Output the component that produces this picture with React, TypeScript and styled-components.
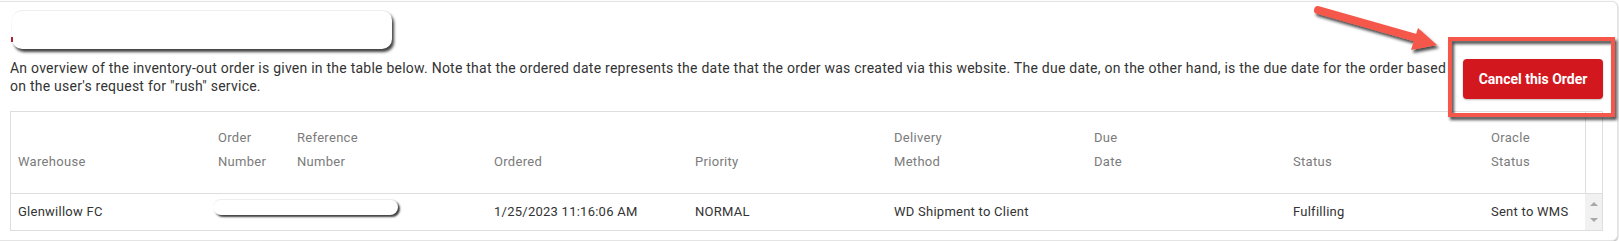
import React from 'react';
import styled, { createGlobalStyle } from 'styled-components';

const GlobalStyle = createGlobalStyle`
  html, body { margin: 0; padding: 0; background: #fff; }
  body { font-family: Roboto, "Noto Sans", "Liberation Sans", Arial, sans-serif; color: #333; }
  * { box-sizing: border-box; }
`;

const Page = styled.div`
  position: relative;
  width: 1619px;
  height: 241px;
  overflow: hidden;
`;

const Card = styled.section`
  width: 1619px;
  height: 240px;
  margin: 1px 0 0 -1px;
  border: 1px solid #e4e4e4;
  border-radius: 0 6px 6px 0;
  box-shadow: 0 1px 2px rgba(0, 0, 0, 0.35);
  padding: 8px 14px 0 10px;
  background: #fff;
`;

const Top = styled.div`
  display: flex;
  align-items: flex-start;
  justify-content: space-between;
`;

const Intro = styled.div`
  width: 1445px;
`;

const TitleRedaction = styled.div`
  position: relative;
  width: 380px;
  height: 39px;
  margin: 0 0 10px 2px;
  border-radius: 10px;
  background: #fff;
  border-top: 1px solid #eee;
  box-shadow: 2px 3px 3px rgba(0, 0, 0, 0.75);
  &::before {
    content: '';
    position: absolute;
    left: -1px;
    top: 26px;
    width: 2px;
    height: 5px;
    background: #b0202a;
  }
`;

const Paragraph = styled.p`
  margin: 0;
  font-size: 14px;
  letter-spacing: 0.24px;
  line-height: 18px;
  color: #333;
`;

const CancelButton = styled.button`
  margin-top: 49px;
  width: 140px;
  height: 40px;
  border: none;
  border-radius: 4px;
  background: #d3171f;
  color: #fff;
  font-family: Roboto, "Noto Sans", Arial, sans-serif;
  font-weight: 700;
  font-size: 14px;
  box-shadow: 0 1px 2px rgba(0, 0, 0, 0.25);
  cursor: pointer;
`;

const Table = styled.table`
  margin-top: 12px;
  width: 1593px;
  table-layout: fixed;
  border-collapse: separate;
  border-spacing: 0;
  border: 1px solid #dedede;
`;

const Col = styled.col<{ $w: number }>`
  width: ${(p) => p.$w}px;
`;

const Th = styled.th<{ $gutter?: boolean }>`
  padding: 14px 7px 19px;
  text-align: left;
  vertical-align: bottom;
  font-weight: 400;
  font-size: 13px;
  letter-spacing: 0.3px;
  line-height: 24px;
  color: #7b7b7b;
  border-bottom: 1px solid #dedede;
  ${(p) => (p.$gutter ? 'border-left: 1px solid #dedede; padding: 0;' : '')}
`;

const Td = styled.td`
  position: relative;
  padding: 9px 7px;
  font-size: 13px;
  letter-spacing: 0.25px;
  line-height: 18px;
  color: #333;
  white-space: nowrap;
`;

const Gutter = styled.td`
  background: #f1f1f1;
  padding: 0;
  vertical-align: top;
`;

const GutterArrows = styled.div`
  display: flex;
  flex-direction: column;
  align-items: center;
  gap: 12px;
  padding-top: 8px;
`;

const Triangle = styled.span<{ $down?: boolean }>`
  width: 0;
  height: 0;
  border-left: 4px solid transparent;
  border-right: 4px solid transparent;
  ${(p) =>
    p.$down
      ? 'border-top: 4px solid #a8a8a8;'
      : 'border-bottom: 4px solid #a8a8a8;'}
`;

const CellRedaction = styled.span`
  position: absolute;
  left: 2px;
  top: 5px;
  width: 185px;
  height: 16px;
  border-radius: 8px;
  background: #fff;
  border-top: 1px solid #eee;
  box-shadow: 2px 2px 2px rgba(0, 0, 0, 0.75);
`;

const Annotation = styled.svg`
  position: absolute;
  left: 0;
  top: 0;
  pointer-events: none;
`;

const columns = [200, 79, 197, 201, 199, 200, 199, 198, 101, 17];

const headers: React.ReactNode[] = [
  'Warehouse',
  <>Order<br />Number</>,
  <>Reference<br />Number</>,
  'Ordered',
  'Priority',
  <>Delivery<br />Method</>,
  <>Due<br />Date</>,
  'Status',
  <>Oracle<br />Status</>,
];

export default function App() {
  return (
    <Page>
      <GlobalStyle />
      <Card>
        <Top>
          <Intro>
            <TitleRedaction />
            <Paragraph>
              An overview of the inventory-out order is given in the table below. Note that the ordered date
              represents the date that the order was created via this website. The due date, on the other hand, is
              the due date for the order based on the user's request for "rush" service.
            </Paragraph>
          </Intro>
          <CancelButton>Cancel this Order</CancelButton>
        </Top>
        <Table>
          <colgroup>
            {columns.map((w, i) => (
              <Col key={i} $w={w} />
            ))}
          </colgroup>
          <thead>
            <tr>
              {headers.map((h, i) => (
                <Th key={i}>{h}</Th>
              ))}
              <Th $gutter />
            </tr>
          </thead>
          <tbody>
            <tr>
              <Td>Glenwillow FC</Td>
              <Td>
                <CellRedaction />
              </Td>
              <Td />
              <Td>1/25/2023 11:16:06 AM</Td>
              <Td>NORMAL</Td>
              <Td>WD Shipment to Client</Td>
              <Td />
              <Td>Fulfilling</Td>
              <Td>Sent to WMS</Td>
              <Gutter>
                <GutterArrows>
                  <Triangle />
                  <Triangle $down />
                </GutterArrows>
              </Gutter>
            </tr>
          </tbody>
        </Table>
      </Card>
      <Annotation width="1619" height="241" viewBox="0 0 1619 241">
        <defs>
          <filter id="shadow" x="-10%" y="-10%" width="130%" height="150%">
            <feDropShadow dx="2" dy="3" stdDeviation="1.4" floodColor="#000" floodOpacity="0.7" />
          </filter>
        </defs>
        <g filter="url(#shadow)">
          <rect x="1450" y="39" width="163" height="76" fill="none" stroke="#f5584b" strokeWidth="4" />
          <line x1="1318" y1="10" x2="1420" y2="39" stroke="#f5584b" strokeWidth="8" strokeLinecap="round" />
          <polygon points="1437,45 1418,28 1411,50" fill="#f5584b" />
        </g>
      </Annotation>
    </Page>
  );
}
